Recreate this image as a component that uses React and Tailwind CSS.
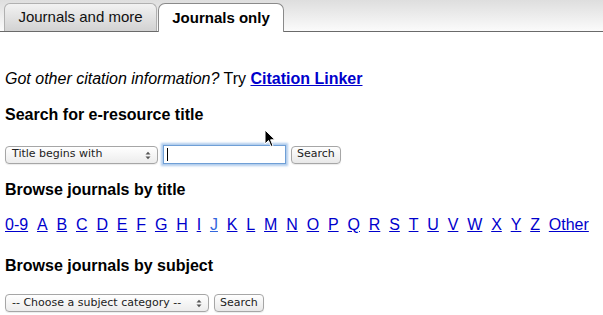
import React from "react";

const letters = ["0-9", "A", "B", "C", "D", "E", "F", "G", "H", "I", "J", "K", "L", "M", "N", "O", "P", "Q", "R", "S", "T", "U", "V", "W", "X", "Y", "Z", "Other"];

function FakeSelect({ label, width }) {
  return (
    <div
      className={`relative flex h-[18px] items-center rounded-[4px] border border-[#a6a6a6] bg-gradient-to-b from-white to-[#ececec] pl-[6px] text-[11px] text-[#222] shadow-[0_1px_1px_rgba(0,0,0,0.08)] ${width}`}
      style={{ fontFamily: '"DejaVu Sans", sans-serif' }}
    >
      <span>{label}</span>
      <svg className="absolute right-[6px] top-[4px]" width="6" height="9" viewBox="0 0 6 9">
        <path d="M0.5 3.5 L3 0.8 L5.5 3.5 Z" fill="#555" />
        <path d="M0.5 5.5 L3 8.2 L5.5 5.5 Z" fill="#555" />
      </svg>
    </div>
  );
}

function Button({ children }) {
  return (
    <div
      className="flex h-[18px] items-center rounded-[4px] border border-[#a6a6a6] bg-gradient-to-b from-white to-[#e8e8e8] px-[5px] text-[11px] text-[#222] shadow-[0_1px_1px_rgba(0,0,0,0.08)]"
      style={{ fontFamily: '"DejaVu Sans", sans-serif' }}
    >
      {children}
    </div>
  );
}

export default function App() {
  return (
    <div className="relative h-[315px] w-[603px] overflow-hidden bg-white text-black" style={{ fontFamily: '"Liberation Sans", Arial, sans-serif' }}>
      {/* tabs */}
      <div className="flex h-[32px] items-end gap-[1px] border-b border-[#6a6a6a] bg-gradient-to-b from-[#dedede] to-[#fbfbfb] pl-[4px]">
        <div className="flex h-[28px] w-[153px] items-center justify-center rounded-t-[6px] border border-b-0 border-[#b0b0b0] bg-gradient-to-b from-[#f2f2f2] to-[#d2d2d2] text-[15px] text-[#111]">
          Journals and more
        </div>
        <div className="-mb-[1px] flex h-[29px] w-[126px] items-center justify-center rounded-t-[7px] border border-b-0 border-[#8a8a8a] bg-white text-[15px] font-bold">
          Journals only
        </div>
      </div>

      <div className="px-[5px]">
        <p className="mt-[38px] text-[16px] leading-[18px]">
          <i>Got other citation information?</i> Try{" "}
          <a href="#" className="font-bold text-[#0000cc] underline">Citation Linker</a>
        </p>

        <h2 className="mt-[18px] text-[16px] font-bold leading-[18px]">Search for e-resource title</h2>

        <div className="mt-[21px] flex items-center">
          <FakeSelect label="Title begins with" width="w-[153px]" />
          <div className="ml-[5px] flex h-[19px] w-[123px] items-center border border-[#6f9fd6] bg-white pl-[3px] shadow-[0_0_2px_2px_rgba(110,160,220,0.55)]">
            <div className="h-[13px] w-[1px] bg-black" />
          </div>
          <div className="ml-[5px]">
            <Button>Search</Button>
          </div>
        </div>

        <h2 className="mt-[17px] text-[16px] font-bold leading-[18px]">Browse journals by title</h2>

        <div className="mt-[17px] flex gap-[8.85px] text-[16px] leading-[18px]">
          {letters.map((l) => (
            <a key={l} href="#" className={`underline ${l === "J" ? "text-[#3366dd]" : "text-[#0000cc]"}`}>
              {l}
            </a>
          ))}
        </div>

        <h2 className="mt-[23px] text-[16px] font-bold leading-[18px]">Browse journals by subject</h2>

        <div className="mt-[19px] flex items-center">
          <FakeSelect label="-- Choose a subject category --" width="w-[204px]" />
          <div className="ml-[5px]">
            <Button>Search</Button>
          </div>
        </div>
      </div>

      {/* mouse cursor */}
      <svg className="absolute left-[264px] top-[129px]" width="12" height="19" viewBox="0 0 12 19">
        <path d="M1 1 L1 15 L4.5 11.5 L7 17.5 L9 16.6 L6.6 10.8 L11 10.8 Z" fill="#000" stroke="#fff" strokeWidth="1" strokeLinejoin="round" />
      </svg>
    </div>
  );
}
